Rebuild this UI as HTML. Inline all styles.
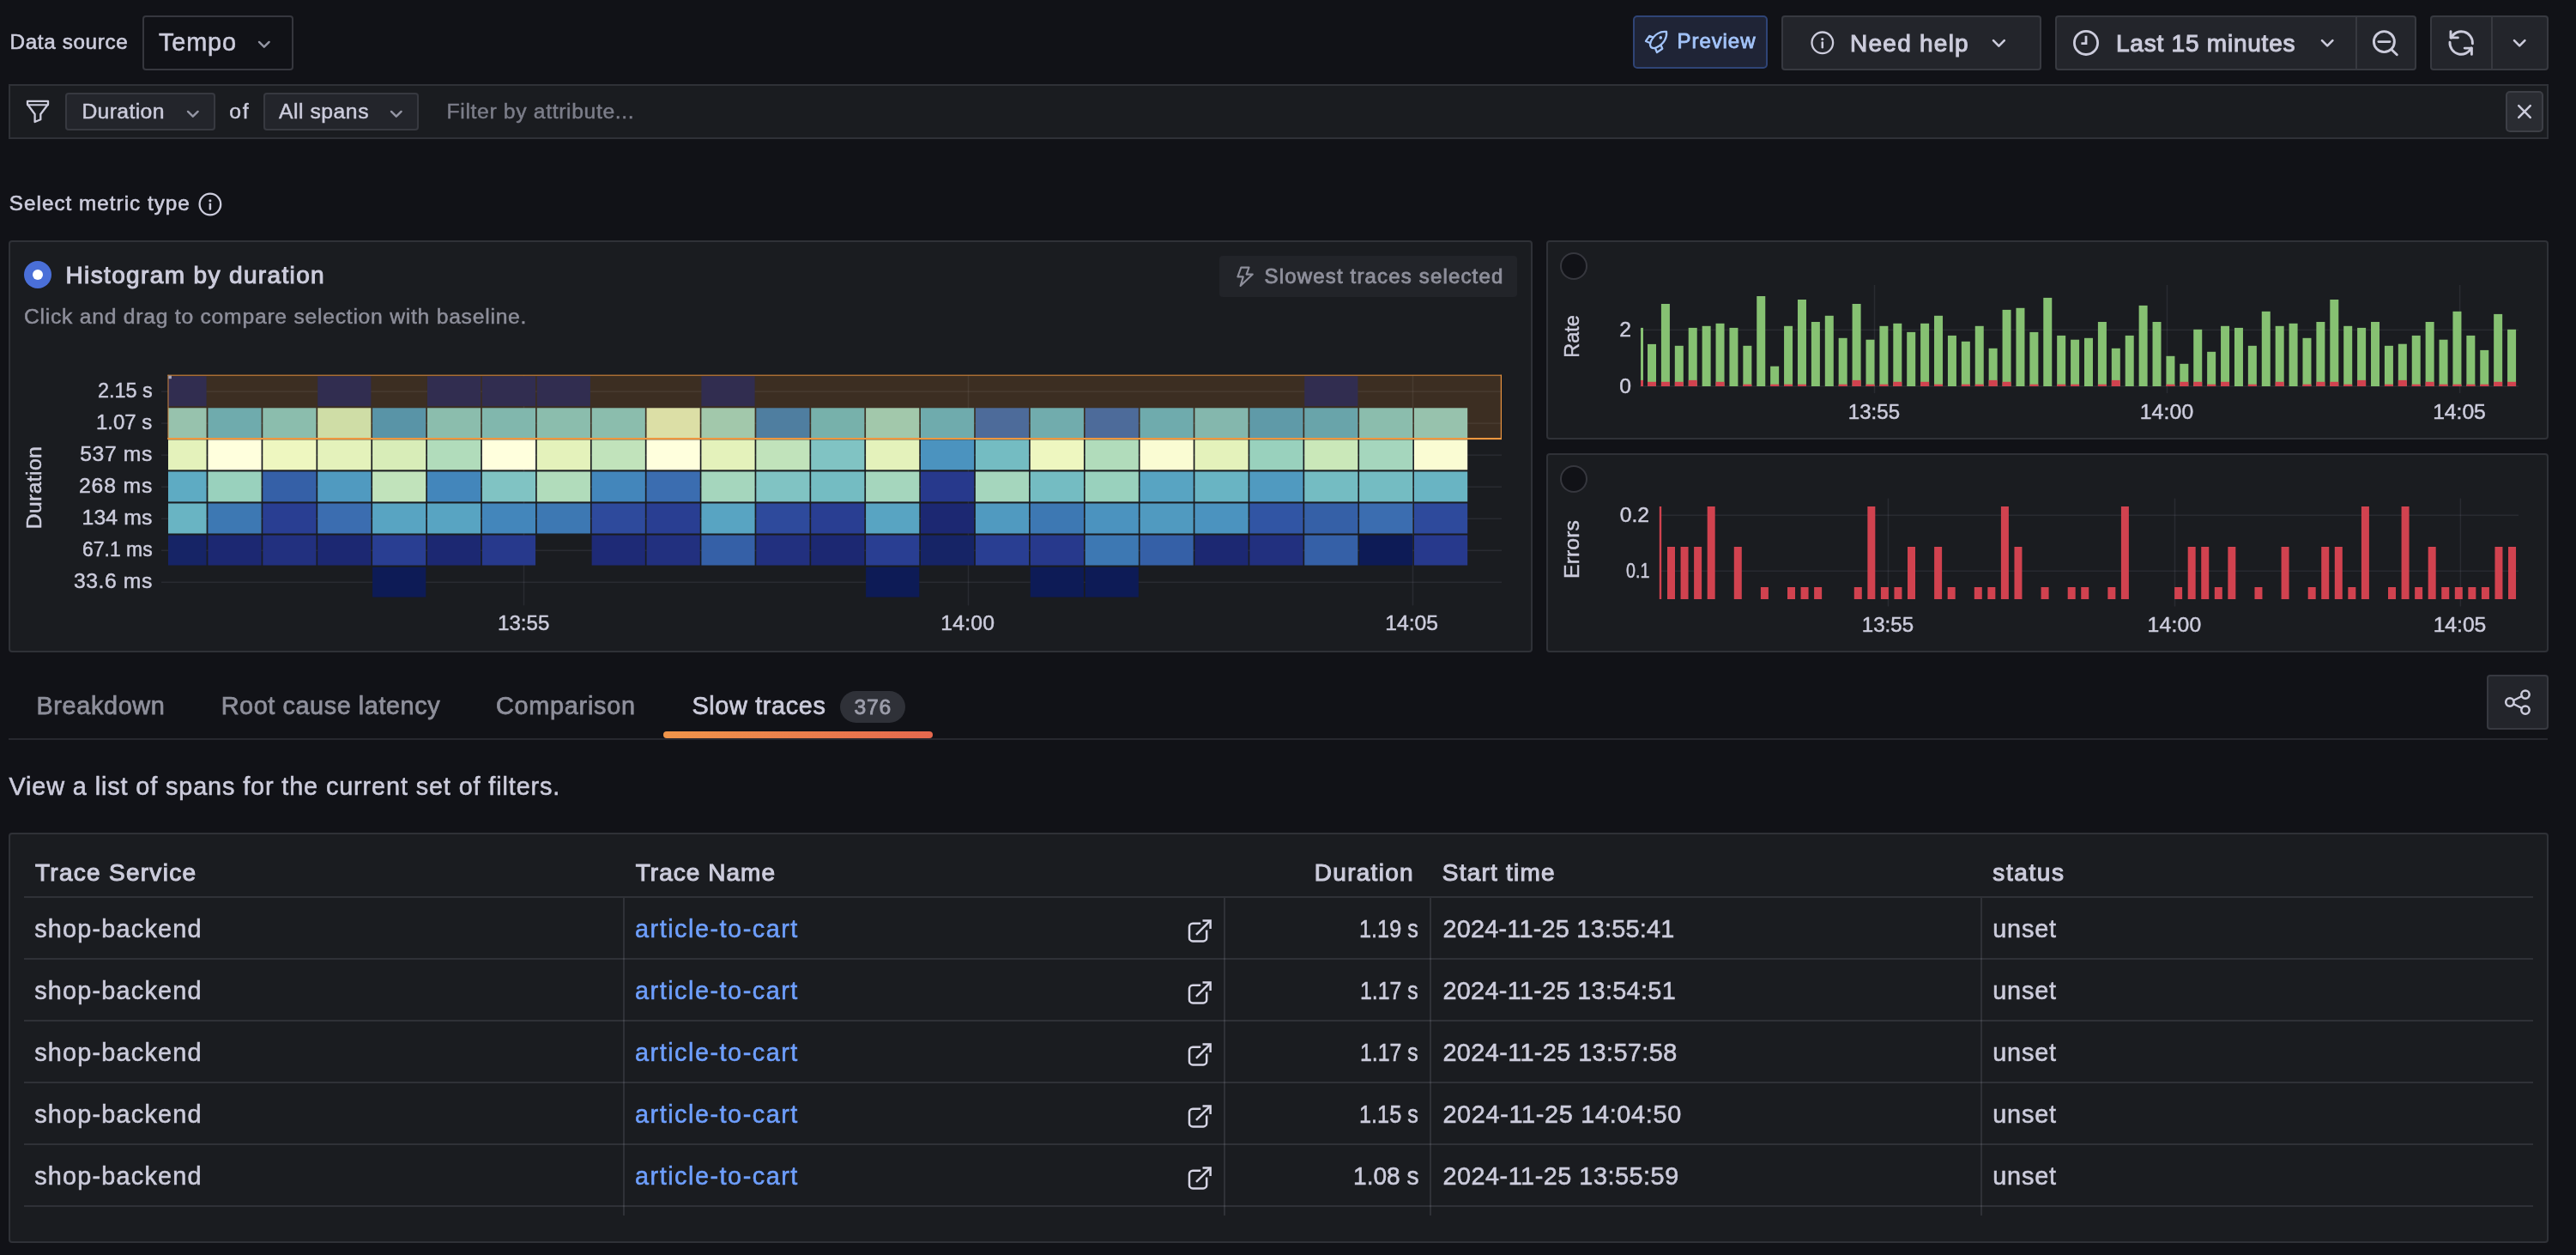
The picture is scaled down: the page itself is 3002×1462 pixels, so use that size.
<!DOCTYPE html>
<html lang="en"><head><meta charset="utf-8"><title>Explore Traces</title>
<style>
html,body{margin:0;padding:0;background:#111217;}
body{width:3002px;height:1462px;overflow:hidden;position:relative;font-family:"Liberation Sans",sans-serif;}
.t{position:absolute;white-space:pre;display:block;}
#root{position:absolute;left:0;top:0;width:3002px;height:1462px;will-change:transform;}
.b{position:absolute;box-sizing:border-box;display:block;}
</style></head><body><div id="root">
<span class="t" style="left:11.60px;top:31.50px;font-size:24.24px;line-height:34px;color:#ccccdc;letter-spacing:0.640px;-webkit-text-stroke:0.62px #ccccdc;">Data source</span>
<div class="b" style="left:166px;top:18px;width:176px;height:64px;background:#111217;border:2px solid rgba(204,204,220,0.20);border-radius:4px;"></div>
<span class="t" style="left:184.90px;top:29.50px;font-size:28.84px;line-height:39px;color:#ccccdc;letter-spacing:0.909px;-webkit-text-stroke:0.55px #ccccdc;">Tempo</span>
<svg class="b" style="left:298.2px;top:42.0px;" width="19.6" height="19.6" viewBox="0 0 19.6 19.6"><path d="M4 6.90 L9.80 12.70 L15.60 6.90" fill="none" stroke="#9496a4" stroke-width="2.4" stroke-linecap="round" stroke-linejoin="round"/></svg>
<div class="b" style="left:1903px;top:18px;width:157px;height:62px;background:#1f2436;border:2px solid #2f4476;border-radius:5px;"></div>
<span class="t" style="left:1954.50px;top:30.50px;font-size:24.00px;line-height:34px;color:#a3c4fa;letter-spacing:0.939px;-webkit-text-stroke:0.82px #a3c4fa;">Preview</span>
<div class="b" style="left:2076px;top:18px;width:303px;height:64px;background:#23252b;border:2px solid rgba(204,204,220,0.12);border-radius:4px;"></div>
<span class="t" style="left:2156.00px;top:31.00px;font-size:28.00px;line-height:39px;color:#ccccdc;letter-spacing:1.255px;-webkit-text-stroke:1.05px #ccccdc;">Need help</span>
<svg class="b" style="left:2318.7px;top:40.0px;" width="20.8" height="20.8" viewBox="0 0 20.8 20.8"><path d="M4 7.20 L10.40 13.60 L16.80 7.20" fill="none" stroke="#ccccdc" stroke-width="2.6" stroke-linecap="round" stroke-linejoin="round"/></svg>
<div class="b" style="left:2395px;top:18px;width:352px;height:64px;background:#23252b;border:2px solid rgba(204,204,220,0.12);border-radius:4px 0 0 4px;"></div>
<div class="b" style="left:2745px;top:18px;width:71px;height:64px;background:#23252b;border:2px solid rgba(204,204,220,0.12);border-radius:0 4px 4px 0;"></div>
<span class="t" style="left:2466.00px;top:31.00px;font-size:28.00px;line-height:39px;color:#ccccdc;letter-spacing:0.773px;-webkit-text-stroke:1.05px #ccccdc;">Last 15 minutes</span>
<svg class="b" style="left:2701.8px;top:40.099999999999994px;" width="20.4" height="20.4" viewBox="0 0 20.4 20.4"><path d="M4 7.10 L10.20 13.30 L16.40 7.10" fill="none" stroke="#ccccdc" stroke-width="2.6" stroke-linecap="round" stroke-linejoin="round"/></svg>
<div class="b" style="left:2832px;top:18px;width:73px;height:64px;background:#23252b;border:2px solid rgba(204,204,220,0.12);border-radius:4px 0 0 4px;"></div>
<div class="b" style="left:2903px;top:18px;width:67px;height:64px;background:#23252b;border:2px solid rgba(204,204,220,0.12);border-radius:0 4px 4px 0;"></div>
<svg class="b" style="left:2925.8px;top:40.099999999999994px;" width="20.4" height="20.4" viewBox="0 0 20.4 20.4"><path d="M4 7.10 L10.20 13.30 L16.40 7.10" fill="none" stroke="#ccccdc" stroke-width="2.6" stroke-linecap="round" stroke-linejoin="round"/></svg>
<div class="b" style="left:10px;top:98px;width:2960px;height:64px;background:#1a1c20;border:2px solid rgba(204,204,220,0.12);"></div>
<div class="b" style="left:76px;top:108px;width:175px;height:44px;background:#23252b;border:2px solid rgba(204,204,220,0.12);border-radius:4px;"></div>
<span class="t" style="left:95.40px;top:112.50px;font-size:24.72px;line-height:34px;color:#ccccdc;letter-spacing:0.366px;-webkit-text-stroke:0.47px #ccccdc;">Duration</span>
<svg class="b" style="left:215.2px;top:122.50000000000001px;" width="19.6" height="19.6" viewBox="0 0 19.6 19.6"><path d="M4 6.90 L9.80 12.70 L15.60 6.90" fill="none" stroke="#9496a4" stroke-width="2.4" stroke-linecap="round" stroke-linejoin="round"/></svg>
<span class="t" style="left:267.20px;top:112.50px;font-size:24.72px;line-height:34px;color:#ccccdc;letter-spacing:1.784px;-webkit-text-stroke:0.47px #ccccdc;">of</span>
<div class="b" style="left:307px;top:108px;width:181px;height:44px;background:#23252b;border:2px solid rgba(204,204,220,0.12);border-radius:4px;"></div>
<span class="t" style="left:325.00px;top:112.50px;font-size:24.72px;line-height:34px;color:#ccccdc;letter-spacing:0.524px;-webkit-text-stroke:0.47px #ccccdc;">All spans</span>
<svg class="b" style="left:452.2px;top:122.50000000000001px;" width="19.6" height="19.6" viewBox="0 0 19.6 19.6"><path d="M4 6.90 L9.80 12.70 L15.60 6.90" fill="none" stroke="#9496a4" stroke-width="2.4" stroke-linecap="round" stroke-linejoin="round"/></svg>
<span class="t" style="left:520.60px;top:112.50px;font-size:24.72px;line-height:34px;color:#7c7e8a;letter-spacing:0.638px;-webkit-text-stroke:0.47px #7c7e8a;">Filter by attribute...</span>
<div class="b" style="left:2920px;top:106px;width:44px;height:48px;background:#2a2c32;border:2px solid rgba(204,204,220,0.12);border-radius:5px;"></div>
<span class="t" style="left:10.80px;top:219.50px;font-size:24.24px;line-height:34px;color:#ccccdc;letter-spacing:1.027px;-webkit-text-stroke:0.62px #ccccdc;">Select metric type</span>
<div class="b" style="left:10px;top:280px;width:1776px;height:480px;background:#1a1c20;border:2px solid rgba(204,204,220,0.12);border-radius:4px;"></div>
<div class="b" style="left:28px;top:304px;width:32px;height:32px;background:#4a6fd8;border-radius:16px;"></div>
<div class="b" style="left:38px;top:314px;width:12px;height:12px;background:#ffffff;border-radius:6px;"></div>
<span class="t" style="left:76.50px;top:301.00px;font-size:28.00px;line-height:39px;color:#ccccdc;letter-spacing:1.364px;-webkit-text-stroke:1.05px #ccccdc;">Histogram by duration</span>
<span class="t" style="left:28.00px;top:351.50px;font-size:24.72px;line-height:34px;color:#8e8f9b;letter-spacing:0.732px;-webkit-text-stroke:0.47px #8e8f9b;">Click and drag to compare selection with baseline.</span>
<div class="b" style="left:1421px;top:298px;width:347px;height:48px;background:#222429;border-radius:4px;"></div>
<span class="t" style="left:1473.60px;top:304.50px;font-size:24.00px;line-height:34px;color:#8e8f9b;letter-spacing:1.163px;-webkit-text-stroke:0.82px #8e8f9b;">Slowest traces selected</span>
<svg class="b" style="left:0px;top:0px;" width="1790" height="760" viewBox="0 0 1790 760"><rect x="188" y="455.35" width="1562" height="1.5" fill="rgba(204,204,220,0.09)"/><rect x="188" y="492.38" width="1562" height="1.5" fill="rgba(204,204,220,0.09)"/><rect x="188" y="529.41" width="1562" height="1.5" fill="rgba(204,204,220,0.09)"/><rect x="188" y="566.44" width="1562" height="1.5" fill="rgba(204,204,220,0.09)"/><rect x="188" y="603.47" width="1562" height="1.5" fill="rgba(204,204,220,0.09)"/><rect x="188" y="640.50" width="1562" height="1.5" fill="rgba(204,204,220,0.09)"/><rect x="188" y="677.53" width="1562" height="1.5" fill="rgba(204,204,220,0.09)"/><rect x="609.75" y="437" width="1.5" height="268.4" fill="rgba(204,204,220,0.09)"/><rect x="1127.75" y="437" width="1.5" height="268.4" fill="rgba(204,204,220,0.09)"/><rect x="1645.75" y="437" width="1.5" height="268.4" fill="rgba(204,204,220,0.09)"/><rect x="196.00" y="438.20" width="44.60" height="35" fill="#0d1b56"/><rect x="370.18" y="438.20" width="62.20" height="35" fill="#0d1b56"/><rect x="497.96" y="438.20" width="62.20" height="35" fill="#0d1b56"/><rect x="561.85" y="438.20" width="62.20" height="35" fill="#0d1b56"/><rect x="625.74" y="438.20" width="62.20" height="35" fill="#0d1b56"/><rect x="817.41" y="438.20" width="62.20" height="35" fill="#0d1b56"/><rect x="1520.20" y="438.20" width="62.20" height="35" fill="#0d1b56"/><rect x="196.00" y="475.27" width="44.60" height="35" fill="#85c9c3"/><rect x="242.40" y="475.27" width="62.20" height="35" fill="#56aec3"/><rect x="306.29" y="475.27" width="62.20" height="35" fill="#77c3c3"/><rect x="370.18" y="475.27" width="62.20" height="35" fill="#c7e9bb"/><rect x="434.07" y="475.27" width="62.20" height="35" fill="#3d93bd"/><rect x="497.96" y="475.27" width="62.20" height="35" fill="#77c3c3"/><rect x="561.85" y="475.27" width="62.20" height="35" fill="#6cbdc3"/><rect x="625.74" y="475.27" width="62.20" height="35" fill="#77c3c3"/><rect x="689.63" y="475.27" width="62.20" height="35" fill="#77c3c3"/><rect x="753.52" y="475.27" width="62.20" height="35" fill="#d6ebbb"/><rect x="817.41" y="475.27" width="62.20" height="35" fill="#92d0c1"/><rect x="881.30" y="475.27" width="62.20" height="35" fill="#3179b4"/><rect x="945.19" y="475.27" width="62.20" height="35" fill="#60b5c1"/><rect x="1009.08" y="475.27" width="62.20" height="35" fill="#92d0c1"/><rect x="1072.97" y="475.27" width="62.20" height="35" fill="#56aec3"/><rect x="1136.86" y="475.27" width="62.20" height="35" fill="#2e63ad"/><rect x="1200.75" y="475.27" width="62.20" height="35" fill="#59b0c3"/><rect x="1264.64" y="475.27" width="62.20" height="35" fill="#2e63ad"/><rect x="1328.53" y="475.27" width="62.20" height="35" fill="#56aec3"/><rect x="1392.42" y="475.27" width="62.20" height="35" fill="#6fbdc3"/><rect x="1456.31" y="475.27" width="62.20" height="35" fill="#439abe"/><rect x="1520.20" y="475.27" width="62.20" height="35" fill="#4fa6c0"/><rect x="1584.09" y="475.27" width="62.20" height="35" fill="#77c3c3"/><rect x="1647.98" y="475.27" width="62.20" height="35" fill="#85c9c3"/><rect x="196.00" y="512.34" width="44.60" height="35" fill="#e4f2bb"/><rect x="242.40" y="512.34" width="62.20" height="35" fill="#ffffdd"/><rect x="306.29" y="512.34" width="62.20" height="35" fill="#eef7c0"/><rect x="370.18" y="512.34" width="62.20" height="35" fill="#e4f2bb"/><rect x="434.07" y="512.34" width="62.20" height="35" fill="#d8edb8"/><rect x="497.96" y="512.34" width="62.20" height="35" fill="#b1dcbb"/><rect x="561.85" y="512.34" width="62.20" height="35" fill="#ffffdd"/><rect x="625.74" y="512.34" width="62.20" height="35" fill="#e4f2bb"/><rect x="689.63" y="512.34" width="62.20" height="35" fill="#c1e3bb"/><rect x="753.52" y="512.34" width="62.20" height="35" fill="#ffffdd"/><rect x="817.41" y="512.34" width="62.20" height="35" fill="#e4f2bb"/><rect x="881.30" y="512.34" width="62.20" height="35" fill="#c1e3bb"/><rect x="945.19" y="512.34" width="62.20" height="35" fill="#80c3c3"/><rect x="1009.08" y="512.34" width="62.20" height="35" fill="#e4f2bb"/><rect x="1072.97" y="512.34" width="62.20" height="35" fill="#4b93bf"/><rect x="1136.86" y="512.34" width="62.20" height="35" fill="#74bcc2"/><rect x="1200.75" y="512.34" width="62.20" height="35" fill="#eef7c0"/><rect x="1264.64" y="512.34" width="62.20" height="35" fill="#b1dcbb"/><rect x="1328.53" y="512.34" width="62.20" height="35" fill="#fafcd3"/><rect x="1392.42" y="512.34" width="62.20" height="35" fill="#e4f2bb"/><rect x="1456.31" y="512.34" width="62.20" height="35" fill="#99d1bd"/><rect x="1520.20" y="512.34" width="62.20" height="35" fill="#cae8b9"/><rect x="1584.09" y="512.34" width="62.20" height="35" fill="#a5d6bd"/><rect x="1647.98" y="512.34" width="62.20" height="35" fill="#fafcd3"/><rect x="196.00" y="549.41" width="44.60" height="35" fill="#5eabc3"/><rect x="242.40" y="549.41" width="62.20" height="35" fill="#99d1bd"/><rect x="306.29" y="549.41" width="62.20" height="35" fill="#3560a7"/><rect x="370.18" y="549.41" width="62.20" height="35" fill="#509ac0"/><rect x="434.07" y="549.41" width="62.20" height="35" fill="#c1e3bb"/><rect x="497.96" y="549.41" width="62.20" height="35" fill="#4386bb"/><rect x="561.85" y="549.41" width="62.20" height="35" fill="#80c3c3"/><rect x="625.74" y="549.41" width="62.20" height="35" fill="#b1dcbb"/><rect x="689.63" y="549.41" width="62.20" height="35" fill="#4386bb"/><rect x="753.52" y="549.41" width="62.20" height="35" fill="#3b6db0"/><rect x="817.41" y="549.41" width="62.20" height="35" fill="#a5d6bd"/><rect x="881.30" y="549.41" width="62.20" height="35" fill="#80c3c3"/><rect x="945.19" y="549.41" width="62.20" height="35" fill="#74bcc2"/><rect x="1009.08" y="549.41" width="62.20" height="35" fill="#a5d6bd"/><rect x="1072.97" y="549.41" width="62.20" height="35" fill="#27398c"/><rect x="1136.86" y="549.41" width="62.20" height="35" fill="#a5d6bd"/><rect x="1200.75" y="549.41" width="62.20" height="35" fill="#74bcc2"/><rect x="1264.64" y="549.41" width="62.20" height="35" fill="#99d1bd"/><rect x="1328.53" y="549.41" width="62.20" height="35" fill="#58a4c2"/><rect x="1392.42" y="549.41" width="62.20" height="35" fill="#69b4c3"/><rect x="1456.31" y="549.41" width="62.20" height="35" fill="#509ac0"/><rect x="1520.20" y="549.41" width="62.20" height="35" fill="#74bcc2"/><rect x="1584.09" y="549.41" width="62.20" height="35" fill="#74bcc2"/><rect x="1647.98" y="549.41" width="62.20" height="35" fill="#69b4c3"/><rect x="196.00" y="586.48" width="44.60" height="35" fill="#69b4c3"/><rect x="242.40" y="586.48" width="62.20" height="35" fill="#3d78b3"/><rect x="306.29" y="586.48" width="62.20" height="35" fill="#293e92"/><rect x="370.18" y="586.48" width="62.20" height="35" fill="#3b6db0"/><rect x="434.07" y="586.48" width="62.20" height="35" fill="#58a4c2"/><rect x="497.96" y="586.48" width="62.20" height="35" fill="#58a4c2"/><rect x="561.85" y="586.48" width="62.20" height="35" fill="#4386bb"/><rect x="625.74" y="586.48" width="62.20" height="35" fill="#3d78b3"/><rect x="689.63" y="586.48" width="62.20" height="35" fill="#2e4a9c"/><rect x="753.52" y="586.48" width="62.20" height="35" fill="#293e92"/><rect x="817.41" y="586.48" width="62.20" height="35" fill="#58a4c2"/><rect x="881.30" y="586.48" width="62.20" height="35" fill="#2e4a9c"/><rect x="945.19" y="586.48" width="62.20" height="35" fill="#293e92"/><rect x="1009.08" y="586.48" width="62.20" height="35" fill="#58a4c2"/><rect x="1072.97" y="586.48" width="62.20" height="35" fill="#1c2872"/><rect x="1136.86" y="586.48" width="62.20" height="35" fill="#509ac0"/><rect x="1200.75" y="586.48" width="62.20" height="35" fill="#3d78b3"/><rect x="1264.64" y="586.48" width="62.20" height="35" fill="#4b93bf"/><rect x="1328.53" y="586.48" width="62.20" height="35" fill="#509ac0"/><rect x="1392.42" y="586.48" width="62.20" height="35" fill="#4b93bf"/><rect x="1456.31" y="586.48" width="62.20" height="35" fill="#3155a4"/><rect x="1520.20" y="586.48" width="62.20" height="35" fill="#3560a7"/><rect x="1584.09" y="586.48" width="62.20" height="35" fill="#3b6db0"/><rect x="1647.98" y="586.48" width="62.20" height="35" fill="#2e4a9c"/><rect x="196.00" y="623.55" width="44.60" height="35" fill="#162466"/><rect x="242.40" y="623.55" width="62.20" height="35" fill="#1c2872"/><rect x="306.29" y="623.55" width="62.20" height="35" fill="#22307f"/><rect x="370.18" y="623.55" width="62.20" height="35" fill="#1c2872"/><rect x="434.07" y="623.55" width="62.20" height="35" fill="#293e92"/><rect x="497.96" y="623.55" width="62.20" height="35" fill="#1c2872"/><rect x="561.85" y="623.55" width="62.20" height="35" fill="#27398c"/><rect x="689.63" y="623.55" width="62.20" height="35" fill="#1e2a76"/><rect x="753.52" y="623.55" width="62.20" height="35" fill="#22307f"/><rect x="817.41" y="623.55" width="62.20" height="35" fill="#3560a7"/><rect x="881.30" y="623.55" width="62.20" height="35" fill="#22307f"/><rect x="945.19" y="623.55" width="62.20" height="35" fill="#1c2872"/><rect x="1009.08" y="623.55" width="62.20" height="35" fill="#293e92"/><rect x="1072.97" y="623.55" width="62.20" height="35" fill="#162466"/><rect x="1136.86" y="623.55" width="62.20" height="35" fill="#293e92"/><rect x="1200.75" y="623.55" width="62.20" height="35" fill="#27398c"/><rect x="1264.64" y="623.55" width="62.20" height="35" fill="#3d78b3"/><rect x="1328.53" y="623.55" width="62.20" height="35" fill="#3560a7"/><rect x="1392.42" y="623.55" width="62.20" height="35" fill="#1c2872"/><rect x="1456.31" y="623.55" width="62.20" height="35" fill="#22307f"/><rect x="1520.20" y="623.55" width="62.20" height="35" fill="#3560a7"/><rect x="1584.09" y="623.55" width="62.20" height="35" fill="#0d1b56"/><rect x="1647.98" y="623.55" width="62.20" height="35" fill="#27398c"/><rect x="434.07" y="660.62" width="62.20" height="35" fill="#0d1b56"/><rect x="1009.08" y="660.62" width="62.20" height="35" fill="#0d1b56"/><rect x="1200.75" y="660.62" width="62.20" height="35" fill="#0d1b56"/><rect x="1264.64" y="660.62" width="62.20" height="35" fill="#0d1b56"/><rect x="195.5" y="436.6" width="1554.4" height="75.4" fill="rgba(255,152,48,0.15)"/><rect x="195.4" y="436.7" width="1554.6" height="1" fill="#d98a3d"/><rect x="195.5" y="436.7" width="1" height="75.3" fill="#c98240"/><rect x="1748.8" y="436.7" width="1.2" height="75.3" fill="#e8923e"/><rect x="195.4" y="510.0" width="1554.6" height="2.1" fill="#ee973f"/><rect x="196.3" y="437.6" width="3.6" height="3.6" fill="#a6a6b8"/></svg>
<span class="t" style="left:113.50px;top:437.50px;font-size:24.72px;line-height:34px;color:#ccccdc;letter-spacing:0.000px;-webkit-text-stroke:0.47px #ccccdc;transform-origin:left center;transform:scaleX(0.9474);">2.15 s</span>
<span class="t" style="left:112.00px;top:474.50px;font-size:24.72px;line-height:34px;color:#ccccdc;letter-spacing:0.000px;-webkit-text-stroke:0.47px #ccccdc;transform-origin:left center;transform:scaleX(0.9697);">1.07 s</span>
<span class="t" style="left:93.20px;top:511.50px;font-size:24.72px;line-height:34px;color:#ccccdc;letter-spacing:0.607px;-webkit-text-stroke:0.47px #ccccdc;">537 ms</span>
<span class="t" style="left:92.00px;top:548.50px;font-size:24.72px;line-height:34px;color:#ccccdc;letter-spacing:0.847px;-webkit-text-stroke:0.47px #ccccdc;">268 ms</span>
<span class="t" style="left:95.60px;top:585.50px;font-size:24.72px;line-height:34px;color:#ccccdc;letter-spacing:0.127px;-webkit-text-stroke:0.47px #ccccdc;">134 ms</span>
<span class="t" style="left:95.60px;top:622.50px;font-size:24.72px;line-height:34px;color:#ccccdc;letter-spacing:0.000px;-webkit-text-stroke:0.47px #ccccdc;transform-origin:left center;transform:scaleX(0.9291);">67.1 ms</span>
<span class="t" style="left:86.00px;top:659.50px;font-size:24.72px;line-height:34px;color:#ccccdc;letter-spacing:0.561px;-webkit-text-stroke:0.47px #ccccdc;">33.6 ms</span>
<span class="t" style="left:-8.05px;top:550.50px;font-size:24.72px;line-height:34px;color:#ccccdc;letter-spacing:0.380px;-webkit-text-stroke:0.47px #ccccdc;transform-origin:center center;transform:rotate(-90deg) scaleX(1.0000);">Duration</span>
<span class="t" style="left:579.60px;top:708.50px;font-size:24.72px;line-height:34px;color:#ccccdc;letter-spacing:0.000px;-webkit-text-stroke:0.47px #ccccdc;transform-origin:left center;transform:scaleX(0.9748);">13:55</span>
<span class="t" style="left:1096.30px;top:708.50px;font-size:24.72px;line-height:34px;color:#ccccdc;letter-spacing:0.185px;-webkit-text-stroke:0.47px #ccccdc;">14:00</span>
<span class="t" style="left:1614.30px;top:708.50px;font-size:24.72px;line-height:34px;color:#ccccdc;letter-spacing:-0.040px;-webkit-text-stroke:0.47px #ccccdc;">14:05</span>
<div class="b" style="left:1802px;top:280px;width:1168px;height:232px;background:#1a1c20;border:2px solid rgba(204,204,220,0.12);border-radius:4px;"></div>
<div class="b" style="left:1818px;top:294px;width:32px;height:32px;background:#111217;border:2px solid rgba(204,204,220,0.20);border-radius:16px;"></div>
<svg class="b" style="left:1790px;top:280px;" width="1200" height="240" viewBox="1790 280 1200 240"><rect x="1911" y="383.65" width="1024" height="1.5" fill="rgba(204,204,220,0.09)"/><rect x="1911" y="449.25" width="1024" height="1.5" fill="rgba(204,204,220,0.09)"/><rect x="2183.75" y="332" width="1.5" height="126" fill="rgba(204,204,220,0.09)"/><rect x="2524.75" y="332" width="1.5" height="126" fill="rgba(204,204,220,0.09)"/><rect x="2865.85" y="332" width="1.5" height="126" fill="rgba(204,204,220,0.09)"/><rect x="1912" y="381.9" width="3" height="68.1" fill="#86c172"/><rect x="1912" y="442.9" width="3" height="7.1" fill="#d1424f"/><rect x="1920.00" y="400.9" width="10" height="49.1" fill="#86c172"/><rect x="1920.00" y="444.8" width="10" height="5.2" fill="#d1424f"/><rect x="1935.91" y="354.0" width="10" height="96.0" fill="#86c172"/><rect x="1935.91" y="444.8" width="10" height="5.2" fill="#d1424f"/><rect x="1951.81" y="402.8" width="10" height="47.2" fill="#86c172"/><rect x="1951.81" y="444.8" width="10" height="5.2" fill="#d1424f"/><rect x="1967.72" y="381.9" width="10" height="68.1" fill="#86c172"/><rect x="1967.72" y="442.9" width="10" height="7.1" fill="#d1424f"/><rect x="1983.62" y="379.8" width="10" height="70.2" fill="#86c172"/><rect x="1999.53" y="376.8" width="10" height="73.2" fill="#86c172"/><rect x="1999.53" y="444.8" width="10" height="5.2" fill="#d1424f"/><rect x="2015.44" y="381.9" width="10" height="68.1" fill="#86c172"/><rect x="2031.34" y="402.8" width="10" height="47.2" fill="#86c172"/><rect x="2031.34" y="447.7" width="10" height="2.3" fill="#d1424f"/><rect x="2047.25" y="345.0" width="10" height="105.0" fill="#86c172"/><rect x="2063.15" y="426.7" width="10" height="23.3" fill="#86c172"/><rect x="2063.15" y="447.7" width="10" height="2.3" fill="#d1424f"/><rect x="2079.06" y="379.8" width="10" height="70.2" fill="#86c172"/><rect x="2079.06" y="447.7" width="10" height="2.3" fill="#d1424f"/><rect x="2094.97" y="349.0" width="10" height="101.0" fill="#86c172"/><rect x="2094.97" y="447.7" width="10" height="2.3" fill="#d1424f"/><rect x="2110.87" y="375.0" width="10" height="75.0" fill="#86c172"/><rect x="2126.78" y="367.8" width="10" height="82.2" fill="#86c172"/><rect x="2142.68" y="393.8" width="10" height="56.2" fill="#86c172"/><rect x="2142.68" y="447.7" width="10" height="2.3" fill="#d1424f"/><rect x="2158.59" y="354.0" width="10" height="96.0" fill="#86c172"/><rect x="2158.59" y="442.9" width="10" height="7.1" fill="#d1424f"/><rect x="2174.50" y="395.7" width="10" height="54.3" fill="#86c172"/><rect x="2174.50" y="447.7" width="10" height="2.3" fill="#d1424f"/><rect x="2190.40" y="379.8" width="10" height="70.2" fill="#86c172"/><rect x="2190.40" y="447.7" width="10" height="2.3" fill="#d1424f"/><rect x="2206.31" y="376.8" width="10" height="73.2" fill="#86c172"/><rect x="2206.31" y="444.8" width="10" height="5.2" fill="#d1424f"/><rect x="2222.21" y="386.9" width="10" height="63.1" fill="#86c172"/><rect x="2238.12" y="376.8" width="10" height="73.2" fill="#86c172"/><rect x="2238.12" y="444.8" width="10" height="5.2" fill="#d1424f"/><rect x="2254.03" y="367.8" width="10" height="82.2" fill="#86c172"/><rect x="2254.03" y="447.7" width="10" height="2.3" fill="#d1424f"/><rect x="2269.93" y="390.9" width="10" height="59.1" fill="#86c172"/><rect x="2285.84" y="397.8" width="10" height="52.2" fill="#86c172"/><rect x="2285.84" y="447.7" width="10" height="2.3" fill="#d1424f"/><rect x="2301.74" y="379.8" width="10" height="70.2" fill="#86c172"/><rect x="2301.74" y="447.7" width="10" height="2.3" fill="#d1424f"/><rect x="2317.65" y="405.8" width="10" height="44.2" fill="#86c172"/><rect x="2317.65" y="442.9" width="10" height="7.1" fill="#d1424f"/><rect x="2333.56" y="360.9" width="10" height="89.1" fill="#86c172"/><rect x="2333.56" y="444.8" width="10" height="5.2" fill="#d1424f"/><rect x="2349.46" y="358.8" width="10" height="91.2" fill="#86c172"/><rect x="2365.37" y="386.9" width="10" height="63.1" fill="#86c172"/><rect x="2365.37" y="447.7" width="10" height="2.3" fill="#d1424f"/><rect x="2381.27" y="346.9" width="10" height="103.1" fill="#86c172"/><rect x="2397.18" y="390.9" width="10" height="59.1" fill="#86c172"/><rect x="2397.18" y="447.7" width="10" height="2.3" fill="#d1424f"/><rect x="2413.09" y="395.7" width="10" height="54.3" fill="#86c172"/><rect x="2413.09" y="447.7" width="10" height="2.3" fill="#d1424f"/><rect x="2428.99" y="393.8" width="10" height="56.2" fill="#86c172"/><rect x="2444.90" y="375.0" width="10" height="75.0" fill="#86c172"/><rect x="2444.90" y="447.7" width="10" height="2.3" fill="#d1424f"/><rect x="2460.80" y="405.8" width="10" height="44.2" fill="#86c172"/><rect x="2460.80" y="442.9" width="10" height="7.1" fill="#d1424f"/><rect x="2476.71" y="390.9" width="10" height="59.1" fill="#86c172"/><rect x="2492.62" y="355.9" width="10" height="94.1" fill="#86c172"/><rect x="2508.52" y="375.0" width="10" height="75.0" fill="#86c172"/><rect x="2524.43" y="414.8" width="10" height="35.2" fill="#86c172"/><rect x="2524.43" y="447.7" width="10" height="2.3" fill="#d1424f"/><rect x="2540.33" y="423.8" width="10" height="26.2" fill="#86c172"/><rect x="2540.33" y="444.8" width="10" height="5.2" fill="#d1424f"/><rect x="2556.24" y="383.8" width="10" height="66.2" fill="#86c172"/><rect x="2556.24" y="444.8" width="10" height="5.2" fill="#d1424f"/><rect x="2572.15" y="409.8" width="10" height="40.2" fill="#86c172"/><rect x="2572.15" y="447.7" width="10" height="2.3" fill="#d1424f"/><rect x="2588.05" y="379.8" width="10" height="70.2" fill="#86c172"/><rect x="2588.05" y="444.8" width="10" height="5.2" fill="#d1424f"/><rect x="2603.96" y="381.9" width="10" height="68.1" fill="#86c172"/><rect x="2619.86" y="402.8" width="10" height="47.2" fill="#86c172"/><rect x="2619.86" y="447.7" width="10" height="2.3" fill="#d1424f"/><rect x="2635.77" y="362.8" width="10" height="87.2" fill="#86c172"/><rect x="2651.68" y="379.8" width="10" height="70.2" fill="#86c172"/><rect x="2651.68" y="444.8" width="10" height="5.2" fill="#d1424f"/><rect x="2667.58" y="376.8" width="10" height="73.2" fill="#86c172"/><rect x="2683.49" y="393.8" width="10" height="56.2" fill="#86c172"/><rect x="2683.49" y="447.7" width="10" height="2.3" fill="#d1424f"/><rect x="2699.39" y="375.0" width="10" height="75.0" fill="#86c172"/><rect x="2699.39" y="444.8" width="10" height="5.2" fill="#d1424f"/><rect x="2715.30" y="349.0" width="10" height="101.0" fill="#86c172"/><rect x="2715.30" y="444.8" width="10" height="5.2" fill="#d1424f"/><rect x="2731.21" y="379.8" width="10" height="70.2" fill="#86c172"/><rect x="2731.21" y="447.7" width="10" height="2.3" fill="#d1424f"/><rect x="2747.11" y="381.9" width="10" height="68.1" fill="#86c172"/><rect x="2747.11" y="442.9" width="10" height="7.1" fill="#d1424f"/><rect x="2763.02" y="375.0" width="10" height="75.0" fill="#86c172"/><rect x="2778.92" y="402.8" width="10" height="47.2" fill="#86c172"/><rect x="2778.92" y="447.7" width="10" height="2.3" fill="#d1424f"/><rect x="2794.83" y="400.7" width="10" height="49.3" fill="#86c172"/><rect x="2794.83" y="442.9" width="10" height="7.1" fill="#d1424f"/><rect x="2810.74" y="390.9" width="10" height="59.1" fill="#86c172"/><rect x="2810.74" y="447.7" width="10" height="2.3" fill="#d1424f"/><rect x="2826.64" y="375.0" width="10" height="75.0" fill="#86c172"/><rect x="2826.64" y="444.8" width="10" height="5.2" fill="#d1424f"/><rect x="2842.55" y="395.7" width="10" height="54.3" fill="#86c172"/><rect x="2842.55" y="447.7" width="10" height="2.3" fill="#d1424f"/><rect x="2858.45" y="362.8" width="10" height="87.2" fill="#86c172"/><rect x="2858.45" y="447.7" width="10" height="2.3" fill="#d1424f"/><rect x="2874.36" y="390.9" width="10" height="59.1" fill="#86c172"/><rect x="2874.36" y="447.7" width="10" height="2.3" fill="#d1424f"/><rect x="2890.27" y="407.9" width="10" height="42.1" fill="#86c172"/><rect x="2890.27" y="447.7" width="10" height="2.3" fill="#d1424f"/><rect x="2906.17" y="365.9" width="10" height="84.1" fill="#86c172"/><rect x="2906.17" y="444.8" width="10" height="5.2" fill="#d1424f"/><rect x="2922.08" y="383.8" width="10" height="66.2" fill="#86c172"/><rect x="2922.08" y="444.8" width="10" height="5.2" fill="#d1424f"/></svg>
<span class="t" style="left:1805.89px;top:374.50px;font-size:24.72px;line-height:34px;color:#ccccdc;letter-spacing:0.000px;-webkit-text-stroke:0.47px #ccccdc;transform-origin:center center;transform:rotate(-90deg) scaleX(0.9499);">Rate</span>
<span class="t" style="left:1887.25px;top:366.50px;font-size:24.72px;line-height:34px;color:#ccccdc;letter-spacing:0.000px;-webkit-text-stroke:0.47px #ccccdc;">2</span>
<span class="t" style="left:1887.25px;top:432.50px;font-size:24.72px;line-height:34px;color:#ccccdc;letter-spacing:0.000px;-webkit-text-stroke:0.47px #ccccdc;">0</span>
<span class="t" style="left:2152.97px;top:462.50px;font-size:24.72px;line-height:34px;color:#ccccdc;letter-spacing:0.000px;-webkit-text-stroke:0.47px #ccccdc;transform-origin:center center;transform:scaleX(0.9748);">13:55</span>
<span class="t" style="left:2493.70px;top:462.50px;font-size:24.72px;line-height:34px;color:#ccccdc;letter-spacing:0.185px;-webkit-text-stroke:0.47px #ccccdc;">14:00</span>
<span class="t" style="left:2835.15px;top:462.50px;font-size:24.72px;line-height:34px;color:#ccccdc;letter-spacing:-0.040px;-webkit-text-stroke:0.47px #ccccdc;">14:05</span>
<div class="b" style="left:1802px;top:528px;width:1168px;height:232px;background:#1a1c20;border:2px solid rgba(204,204,220,0.12);border-radius:4px;"></div>
<div class="b" style="left:1818px;top:542px;width:32px;height:32px;background:#111217;border:2px solid rgba(204,204,220,0.20);border-radius:16px;"></div>
<svg class="b" style="left:1790px;top:528px;" width="1200" height="240" viewBox="1790 528 1200 240"><rect x="1934" y="599.45" width="1001" height="1.5" fill="rgba(204,204,220,0.09)"/><rect x="1934" y="664.45" width="1001" height="1.5" fill="rgba(204,204,220,0.09)"/><rect x="2199.75" y="580.5" width="1.5" height="126" fill="rgba(204,204,220,0.09)"/><rect x="2533.75" y="580.5" width="1.5" height="126" fill="rgba(204,204,220,0.09)"/><rect x="2866.65" y="580.5" width="1.5" height="126" fill="rgba(204,204,220,0.09)"/><rect x="1933.8" y="590" width="2.4" height="108" fill="#d1424f"/><rect x="1943.00" y="637" width="9" height="61" fill="#d1424f"/><rect x="1958.56" y="637" width="9" height="61" fill="#d1424f"/><rect x="1974.11" y="637" width="9" height="61" fill="#d1424f"/><rect x="1989.67" y="590" width="9" height="108" fill="#d1424f"/><rect x="2020.78" y="637" width="9" height="61" fill="#d1424f"/><rect x="2051.89" y="684" width="9" height="14" fill="#d1424f"/><rect x="2083.00" y="684" width="9" height="14" fill="#d1424f"/><rect x="2098.56" y="684" width="9" height="14" fill="#d1424f"/><rect x="2114.12" y="684" width="9" height="14" fill="#d1424f"/><rect x="2160.78" y="684" width="9" height="14" fill="#d1424f"/><rect x="2176.34" y="590" width="9" height="108" fill="#d1424f"/><rect x="2191.90" y="684" width="9" height="14" fill="#d1424f"/><rect x="2207.45" y="684" width="9" height="14" fill="#d1424f"/><rect x="2223.01" y="637" width="9" height="61" fill="#d1424f"/><rect x="2254.12" y="637" width="9" height="61" fill="#d1424f"/><rect x="2269.68" y="684" width="9" height="14" fill="#d1424f"/><rect x="2300.79" y="684" width="9" height="14" fill="#d1424f"/><rect x="2316.34" y="684" width="9" height="14" fill="#d1424f"/><rect x="2331.90" y="590" width="9" height="108" fill="#d1424f"/><rect x="2347.46" y="637" width="9" height="61" fill="#d1424f"/><rect x="2378.57" y="684" width="9" height="14" fill="#d1424f"/><rect x="2409.68" y="684" width="9" height="14" fill="#d1424f"/><rect x="2425.24" y="684" width="9" height="14" fill="#d1424f"/><rect x="2456.35" y="684" width="9" height="14" fill="#d1424f"/><rect x="2471.90" y="590" width="9" height="108" fill="#d1424f"/><rect x="2534.13" y="684" width="9" height="14" fill="#d1424f"/><rect x="2549.68" y="637" width="9" height="61" fill="#d1424f"/><rect x="2565.24" y="637" width="9" height="61" fill="#d1424f"/><rect x="2580.80" y="684" width="9" height="14" fill="#d1424f"/><rect x="2596.35" y="637" width="9" height="61" fill="#d1424f"/><rect x="2627.46" y="684" width="9" height="14" fill="#d1424f"/><rect x="2658.58" y="637" width="9" height="61" fill="#d1424f"/><rect x="2689.69" y="684" width="9" height="14" fill="#d1424f"/><rect x="2705.24" y="637" width="9" height="61" fill="#d1424f"/><rect x="2720.80" y="637" width="9" height="61" fill="#d1424f"/><rect x="2736.36" y="684" width="9" height="14" fill="#d1424f"/><rect x="2751.91" y="590" width="9" height="108" fill="#d1424f"/><rect x="2783.02" y="684" width="9" height="14" fill="#d1424f"/><rect x="2798.58" y="590" width="9" height="108" fill="#d1424f"/><rect x="2814.14" y="684" width="9" height="14" fill="#d1424f"/><rect x="2829.69" y="637" width="9" height="61" fill="#d1424f"/><rect x="2845.25" y="684" width="9" height="14" fill="#d1424f"/><rect x="2860.80" y="684" width="9" height="14" fill="#d1424f"/><rect x="2876.36" y="684" width="9" height="14" fill="#d1424f"/><rect x="2891.92" y="684" width="9" height="14" fill="#d1424f"/><rect x="2907.47" y="637" width="9" height="61" fill="#d1424f"/><rect x="2923.03" y="637" width="9" height="61" fill="#d1424f"/></svg>
<span class="t" style="left:1798.10px;top:622.50px;font-size:24.72px;line-height:34px;color:#ccccdc;letter-spacing:0.101px;-webkit-text-stroke:0.47px #ccccdc;transform-origin:center center;transform:rotate(-90deg) scaleX(1.0000);">Errors</span>
<span class="t" style="left:1887.70px;top:582.50px;font-size:24.72px;line-height:34px;color:#ccccdc;letter-spacing:0.018px;-webkit-text-stroke:0.47px #ccccdc;">0.2</span>
<span class="t" style="left:1894.70px;top:647.50px;font-size:24.72px;line-height:34px;color:#ccccdc;letter-spacing:0.000px;-webkit-text-stroke:0.47px #ccccdc;transform-origin:left center;transform:scaleX(0.7973);">0.1</span>
<span class="t" style="left:2168.87px;top:710.50px;font-size:24.72px;line-height:34px;color:#ccccdc;letter-spacing:0.000px;-webkit-text-stroke:0.47px #ccccdc;transform-origin:center center;transform:scaleX(0.9748);">13:55</span>
<span class="t" style="left:2502.60px;top:710.50px;font-size:24.72px;line-height:34px;color:#ccccdc;letter-spacing:0.185px;-webkit-text-stroke:0.47px #ccccdc;">14:00</span>
<span class="t" style="left:2835.65px;top:710.50px;font-size:24.72px;line-height:34px;color:#ccccdc;letter-spacing:-0.040px;-webkit-text-stroke:0.47px #ccccdc;">14:05</span>
<div class="b" style="left:10px;top:860px;width:2959px;height:2px;background:rgba(204,204,220,0.12);"></div>
<span class="t" style="left:42.40px;top:802.50px;font-size:28.84px;line-height:39px;color:#8e8f9b;letter-spacing:0.651px;-webkit-text-stroke:0.75px #8e8f9b;">Breakdown</span>
<span class="t" style="left:257.70px;top:802.50px;font-size:28.84px;line-height:39px;color:#8e8f9b;letter-spacing:0.572px;-webkit-text-stroke:0.75px #8e8f9b;">Root cause latency</span>
<span class="t" style="left:578.00px;top:802.50px;font-size:28.84px;line-height:39px;color:#8e8f9b;letter-spacing:0.724px;-webkit-text-stroke:0.75px #8e8f9b;">Comparison</span>
<span class="t" style="left:806.40px;top:802.50px;font-size:28.84px;line-height:39px;color:#ccccdc;letter-spacing:0.654px;-webkit-text-stroke:0.75px #ccccdc;">Slow traces</span>
<div class="b" style="left:979px;top:805px;width:76px;height:37px;background:#2f3138;border-radius:19px;"></div>
<span class="t" style="left:995.50px;top:806.50px;font-size:24.72px;line-height:34px;color:#9d9eab;letter-spacing:0.777px;-webkit-text-stroke:0.8px #9d9eab;">376</span>
<div class="b" style="left:773px;top:852px;width:314px;height:8px;border-radius:4px;background:linear-gradient(90deg,#f0954a 0%,#e5684e 100%);"></div>
<div class="b" style="left:2898px;top:786px;width:72px;height:64px;background:#23252b;border:2px solid rgba(204,204,220,0.12);border-radius:4px;"></div>
<span class="t" style="left:10.50px;top:896.50px;font-size:28.84px;line-height:39px;color:#ccccdc;letter-spacing:0.877px;-webkit-text-stroke:0.55px #ccccdc;">View a list of spans for the current set of filters.</span>
<div class="b" style="left:10px;top:970px;width:2960px;height:478px;background:#1a1c20;border:2px solid rgba(204,204,220,0.12);border-radius:4px;"></div>
<span class="t" style="left:41.00px;top:997.00px;font-size:28.00px;line-height:39px;color:#ccccdc;letter-spacing:1.276px;-webkit-text-stroke:1.05px #ccccdc;">Trace Service</span>
<span class="t" style="left:740.70px;top:997.00px;font-size:28.00px;line-height:39px;color:#ccccdc;letter-spacing:1.033px;-webkit-text-stroke:1.05px #ccccdc;">Trace Name</span>
<span class="t" style="left:1531.80px;top:997.00px;font-size:28.00px;line-height:39px;color:#ccccdc;letter-spacing:1.280px;-webkit-text-stroke:1.05px #ccccdc;">Duration</span>
<span class="t" style="left:1680.80px;top:997.00px;font-size:28.00px;line-height:39px;color:#ccccdc;letter-spacing:1.210px;-webkit-text-stroke:1.05px #ccccdc;">Start time</span>
<span class="t" style="left:2322.30px;top:997.00px;font-size:28.00px;line-height:39px;color:#ccccdc;letter-spacing:1.599px;-webkit-text-stroke:1.05px #ccccdc;">status</span>
<div class="b" style="left:28px;top:1044px;width:2924px;height:2px;background:rgba(204,204,220,0.12);"></div>
<div class="b" style="left:28px;top:1116px;width:2924px;height:2px;background:rgba(204,204,220,0.12);"></div>
<div class="b" style="left:28px;top:1188px;width:2924px;height:2px;background:rgba(204,204,220,0.12);"></div>
<div class="b" style="left:28px;top:1260px;width:2924px;height:2px;background:rgba(204,204,220,0.12);"></div>
<div class="b" style="left:28px;top:1332px;width:2924px;height:2px;background:rgba(204,204,220,0.12);"></div>
<div class="b" style="left:28px;top:1404px;width:2924px;height:2px;background:rgba(204,204,220,0.12);"></div>
<div class="b" style="left:726px;top:1046px;width:2px;height:370px;background:rgba(204,204,220,0.12);"></div>
<div class="b" style="left:1426px;top:1046px;width:2px;height:370px;background:rgba(204,204,220,0.12);"></div>
<div class="b" style="left:1666px;top:1046px;width:2px;height:370px;background:rgba(204,204,220,0.12);"></div>
<div class="b" style="left:2308px;top:1046px;width:2px;height:370px;background:rgba(204,204,220,0.12);"></div>
<span class="t" style="left:40.20px;top:1062.50px;font-size:28.84px;line-height:39px;color:#ccccdc;letter-spacing:1.210px;-webkit-text-stroke:0.55px #ccccdc;">shop-backend</span>
<span class="t" style="left:740.00px;top:1062.50px;font-size:28.84px;line-height:39px;color:#6e9fff;letter-spacing:1.509px;-webkit-text-stroke:0.55px #6e9fff;">article-to-cart</span>
<span class="t" style="left:1584.20px;top:1062.50px;font-size:28.84px;line-height:39px;color:#ccccdc;letter-spacing:0.000px;-webkit-text-stroke:0.55px #ccccdc;transform-origin:left center;transform:scaleX(0.8770);">1.19 s</span>
<span class="t" style="left:1681.40px;top:1062.50px;font-size:28.84px;line-height:39px;color:#ccccdc;letter-spacing:0.241px;-webkit-text-stroke:0.55px #ccccdc;">2024-11-25 13:55:41</span>
<span class="t" style="left:2322.30px;top:1062.50px;font-size:28.84px;line-height:39px;color:#ccccdc;letter-spacing:0.787px;-webkit-text-stroke:0.55px #ccccdc;">unset</span>
<span class="t" style="left:40.20px;top:1134.50px;font-size:28.84px;line-height:39px;color:#ccccdc;letter-spacing:1.210px;-webkit-text-stroke:0.55px #ccccdc;">shop-backend</span>
<span class="t" style="left:740.00px;top:1134.50px;font-size:28.84px;line-height:39px;color:#6e9fff;letter-spacing:1.509px;-webkit-text-stroke:0.55px #6e9fff;">article-to-cart</span>
<span class="t" style="left:1585.40px;top:1134.50px;font-size:28.84px;line-height:39px;color:#ccccdc;letter-spacing:0.000px;-webkit-text-stroke:0.55px #ccccdc;transform-origin:left center;transform:scaleX(0.8617);">1.17 s</span>
<span class="t" style="left:1681.40px;top:1134.50px;font-size:28.84px;line-height:39px;color:#ccccdc;letter-spacing:0.319px;-webkit-text-stroke:0.55px #ccccdc;">2024-11-25 13:54:51</span>
<span class="t" style="left:2322.30px;top:1134.50px;font-size:28.84px;line-height:39px;color:#ccccdc;letter-spacing:0.787px;-webkit-text-stroke:0.55px #ccccdc;">unset</span>
<span class="t" style="left:40.20px;top:1206.50px;font-size:28.84px;line-height:39px;color:#ccccdc;letter-spacing:1.210px;-webkit-text-stroke:0.55px #ccccdc;">shop-backend</span>
<span class="t" style="left:740.00px;top:1206.50px;font-size:28.84px;line-height:39px;color:#6e9fff;letter-spacing:1.509px;-webkit-text-stroke:0.55px #6e9fff;">article-to-cart</span>
<span class="t" style="left:1585.40px;top:1206.50px;font-size:28.84px;line-height:39px;color:#ccccdc;letter-spacing:0.000px;-webkit-text-stroke:0.55px #ccccdc;transform-origin:left center;transform:scaleX(0.8617);">1.17 s</span>
<span class="t" style="left:1681.40px;top:1206.50px;font-size:28.84px;line-height:39px;color:#ccccdc;letter-spacing:0.402px;-webkit-text-stroke:0.55px #ccccdc;">2024-11-25 13:57:58</span>
<span class="t" style="left:2322.30px;top:1206.50px;font-size:28.84px;line-height:39px;color:#ccccdc;letter-spacing:0.787px;-webkit-text-stroke:0.55px #ccccdc;">unset</span>
<span class="t" style="left:40.20px;top:1278.50px;font-size:28.84px;line-height:39px;color:#ccccdc;letter-spacing:1.210px;-webkit-text-stroke:0.55px #ccccdc;">shop-backend</span>
<span class="t" style="left:740.00px;top:1278.50px;font-size:28.84px;line-height:39px;color:#6e9fff;letter-spacing:1.509px;-webkit-text-stroke:0.55px #6e9fff;">article-to-cart</span>
<span class="t" style="left:1584.20px;top:1278.50px;font-size:28.84px;line-height:39px;color:#ccccdc;letter-spacing:0.000px;-webkit-text-stroke:0.55px #ccccdc;transform-origin:left center;transform:scaleX(0.8770);">1.15 s</span>
<span class="t" style="left:1681.40px;top:1278.50px;font-size:28.84px;line-height:39px;color:#ccccdc;letter-spacing:0.680px;-webkit-text-stroke:0.55px #ccccdc;">2024-11-25 14:04:50</span>
<span class="t" style="left:2322.30px;top:1278.50px;font-size:28.84px;line-height:39px;color:#ccccdc;letter-spacing:0.787px;-webkit-text-stroke:0.55px #ccccdc;">unset</span>
<span class="t" style="left:40.20px;top:1350.50px;font-size:28.84px;line-height:39px;color:#ccccdc;letter-spacing:1.210px;-webkit-text-stroke:0.55px #ccccdc;">shop-backend</span>
<span class="t" style="left:740.00px;top:1350.50px;font-size:28.84px;line-height:39px;color:#6e9fff;letter-spacing:1.509px;-webkit-text-stroke:0.55px #6e9fff;">article-to-cart</span>
<span class="t" style="left:1576.50px;top:1350.50px;font-size:28.84px;line-height:39px;color:#ccccdc;letter-spacing:0.000px;-webkit-text-stroke:0.55px #ccccdc;transform-origin:left center;transform:scaleX(0.9750);">1.08 s</span>
<span class="t" style="left:1681.40px;top:1350.50px;font-size:28.84px;line-height:39px;color:#ccccdc;letter-spacing:0.513px;-webkit-text-stroke:0.55px #ccccdc;">2024-11-25 13:55:59</span>
<span class="t" style="left:2322.30px;top:1350.50px;font-size:28.84px;line-height:39px;color:#ccccdc;letter-spacing:0.787px;-webkit-text-stroke:0.55px #ccccdc;">unset</span>
<svg class="b" style="left:0px;top:0px;pointer-events:none;" width="3002" height="1462" viewBox="0 0 3002 1462"><g transform="translate(1917 36)"><path d="M25 1 C18 0 11 4 7 12 C5.5 15 5.8 17 7 19 C9 20.5 11 20.5 14 19 C22 15 26 8 25 1 Z" fill="none" stroke="#a3c4fa" stroke-width="2.3" stroke-linecap="round" stroke-linejoin="round"/><path d="M9.5 7.5 L5.2 5.8 L1 12 L5.8 14" fill="none" stroke="#a3c4fa" stroke-width="2.3" stroke-linecap="round" stroke-linejoin="round"/><path d="M18.5 16.5 L20.3 20.8 L14 25 L12 20.2" fill="none" stroke="#a3c4fa" stroke-width="2.3" stroke-linecap="round" stroke-linejoin="round"/><circle cx="18.3" cy="7.9" r="1.8" fill="#a3c4fa"/></g><circle cx="2123.8" cy="49.8" r="12.3" fill="none" stroke="#ccccdc" stroke-width="2.3"/><circle cx="2123.8" cy="45.599999999999994" r="1.55" fill="#ccccdc"/><path d="M2123.8 49.599999999999994 V55.199999999999996" fill="none" stroke="#ccccdc" stroke-width="2.5" stroke-linecap="round" stroke-linejoin="round"/><circle cx="2431" cy="49.9" r="13.6" fill="none" stroke="#ccccdc" stroke-width="2.8"/><path d="M2431 41.7 V50.699999999999996 H2425.4" fill="none" stroke="#ccccdc" stroke-width="2.8" stroke-linecap="butt" stroke-linejoin="miter"/><circle cx="2778.4" cy="48.6" r="12.0" fill="none" stroke="#ccccdc" stroke-width="2.9"/><path d="M2771.9 48.6 H2784.9" fill="none" stroke="#ccccdc" stroke-width="2.9" stroke-linecap="round" stroke-linejoin="round"/><path d="M2787.3 58.0 L2793.3 63.7" fill="none" stroke="#ccccdc" stroke-width="2.9" stroke-linecap="round" stroke-linejoin="round"/><path d="M2856.3999999999996 44.1 A13.2 13.2 0 0 1 2881.3999999999996 50.8" fill="none" stroke="#ccccdc" stroke-width="2.9" stroke-linecap="round" stroke-linejoin="round"/><path d="M2880.0 55.9 A13.2 13.2 0 0 1 2855.0 49.2" fill="none" stroke="#ccccdc" stroke-width="2.9" stroke-linecap="round" stroke-linejoin="round"/><path d="M2856.0 36.6 V43.9 H2864.3999999999996" fill="none" stroke="#ccccdc" stroke-width="2.9" stroke-linecap="round" stroke-linejoin="round"/><path d="M2880.3999999999996 63.4 V56.1 H2872.2" fill="none" stroke="#ccccdc" stroke-width="2.9" stroke-linecap="round" stroke-linejoin="round"/><path d="M32 117.8 H56 V121.5 L47.3 133 V139.2 L40.6 142 V133 L32 121.5 Z" fill="none" stroke="#ccccdc" stroke-width="2.3" stroke-linecap="round" stroke-linejoin="round"/><path d="M32 122.2 H56" fill="none" stroke="#ccccdc" stroke-width="2.0" stroke-linecap="round" stroke-linejoin="round"/><path d="M2935.2 123.2 L2948.8 136.8 M2948.8 123.2 L2935.2 136.8" fill="none" stroke="#ccccdc" stroke-width="2.5" stroke-linecap="round" stroke-linejoin="round"/><circle cx="244.9" cy="238" r="12.3" fill="none" stroke="#ccccdc" stroke-width="2.3"/><circle cx="244.9" cy="233.8" r="1.55" fill="#ccccdc"/><path d="M244.9 237.8 V243.4" fill="none" stroke="#ccccdc" stroke-width="2.5" stroke-linecap="round" stroke-linejoin="round"/><path d="M1446.3 311.6 H1455.5 L1452.6 319.6 H1459.8 L1445.6 333 L1448.8 322.4 H1442.4 Z" fill="none" stroke="#8e8f9b" stroke-width="2.1" stroke-linecap="round" stroke-linejoin="round"/><path d="M2939 811 L2929 816 M2929 820 L2939 825" fill="none" stroke="#ccccdc" stroke-width="2.5" stroke-linecap="round" stroke-linejoin="round"/><circle cx="2943" cy="809.1" r="4.7" fill="none" stroke="#ccccdc" stroke-width="2.5"/><circle cx="2924.9" cy="818" r="4.7" fill="none" stroke="#ccccdc" stroke-width="2.5"/><circle cx="2943" cy="827.1" r="4.7" fill="none" stroke="#ccccdc" stroke-width="2.5"/><path d="M1399.2 1075.8 H1390 A4 4 0 0 0 1386 1079.8 V1092.3999999999999 A4 4 0 0 0 1390 1096.3999999999999 H1402.2 A4 4 0 0 0 1406.2 1092.3999999999999 V1083.3999999999999" fill="none" stroke="#d5d4e4" stroke-width="2.5" stroke-linecap="butt" stroke-linejoin="round"/><path d="M1394 1088.8 L1410 1072.8" fill="none" stroke="#d5d4e4" stroke-width="2.5" stroke-linecap="butt" stroke-linejoin="round"/><path d="M1401.5 1072.6 H1410.6 V1082.0" fill="none" stroke="#d5d4e4" stroke-width="2.5" stroke-linecap="butt" stroke-linejoin="miter"/><path d="M1399.2 1147.8 H1390 A4 4 0 0 0 1386 1151.8 V1164.3999999999999 A4 4 0 0 0 1390 1168.3999999999999 H1402.2 A4 4 0 0 0 1406.2 1164.3999999999999 V1155.3999999999999" fill="none" stroke="#d5d4e4" stroke-width="2.5" stroke-linecap="butt" stroke-linejoin="round"/><path d="M1394 1160.8 L1410 1144.8" fill="none" stroke="#d5d4e4" stroke-width="2.5" stroke-linecap="butt" stroke-linejoin="round"/><path d="M1401.5 1144.6 H1410.6 V1154.0" fill="none" stroke="#d5d4e4" stroke-width="2.5" stroke-linecap="butt" stroke-linejoin="miter"/><path d="M1399.2 1219.8 H1390 A4 4 0 0 0 1386 1223.8 V1236.3999999999999 A4 4 0 0 0 1390 1240.3999999999999 H1402.2 A4 4 0 0 0 1406.2 1236.3999999999999 V1227.3999999999999" fill="none" stroke="#d5d4e4" stroke-width="2.5" stroke-linecap="butt" stroke-linejoin="round"/><path d="M1394 1232.8 L1410 1216.8" fill="none" stroke="#d5d4e4" stroke-width="2.5" stroke-linecap="butt" stroke-linejoin="round"/><path d="M1401.5 1216.6 H1410.6 V1226.0" fill="none" stroke="#d5d4e4" stroke-width="2.5" stroke-linecap="butt" stroke-linejoin="miter"/><path d="M1399.2 1291.8 H1390 A4 4 0 0 0 1386 1295.8 V1308.3999999999999 A4 4 0 0 0 1390 1312.3999999999999 H1402.2 A4 4 0 0 0 1406.2 1308.3999999999999 V1299.3999999999999" fill="none" stroke="#d5d4e4" stroke-width="2.5" stroke-linecap="butt" stroke-linejoin="round"/><path d="M1394 1304.8 L1410 1288.8" fill="none" stroke="#d5d4e4" stroke-width="2.5" stroke-linecap="butt" stroke-linejoin="round"/><path d="M1401.5 1288.6 H1410.6 V1298.0" fill="none" stroke="#d5d4e4" stroke-width="2.5" stroke-linecap="butt" stroke-linejoin="miter"/><path d="M1399.2 1363.8 H1390 A4 4 0 0 0 1386 1367.8 V1380.3999999999999 A4 4 0 0 0 1390 1384.3999999999999 H1402.2 A4 4 0 0 0 1406.2 1380.3999999999999 V1371.3999999999999" fill="none" stroke="#d5d4e4" stroke-width="2.5" stroke-linecap="butt" stroke-linejoin="round"/><path d="M1394 1376.8 L1410 1360.8" fill="none" stroke="#d5d4e4" stroke-width="2.5" stroke-linecap="butt" stroke-linejoin="round"/><path d="M1401.5 1360.6 H1410.6 V1370.0" fill="none" stroke="#d5d4e4" stroke-width="2.5" stroke-linecap="butt" stroke-linejoin="miter"/></svg>
</div></body></html>
